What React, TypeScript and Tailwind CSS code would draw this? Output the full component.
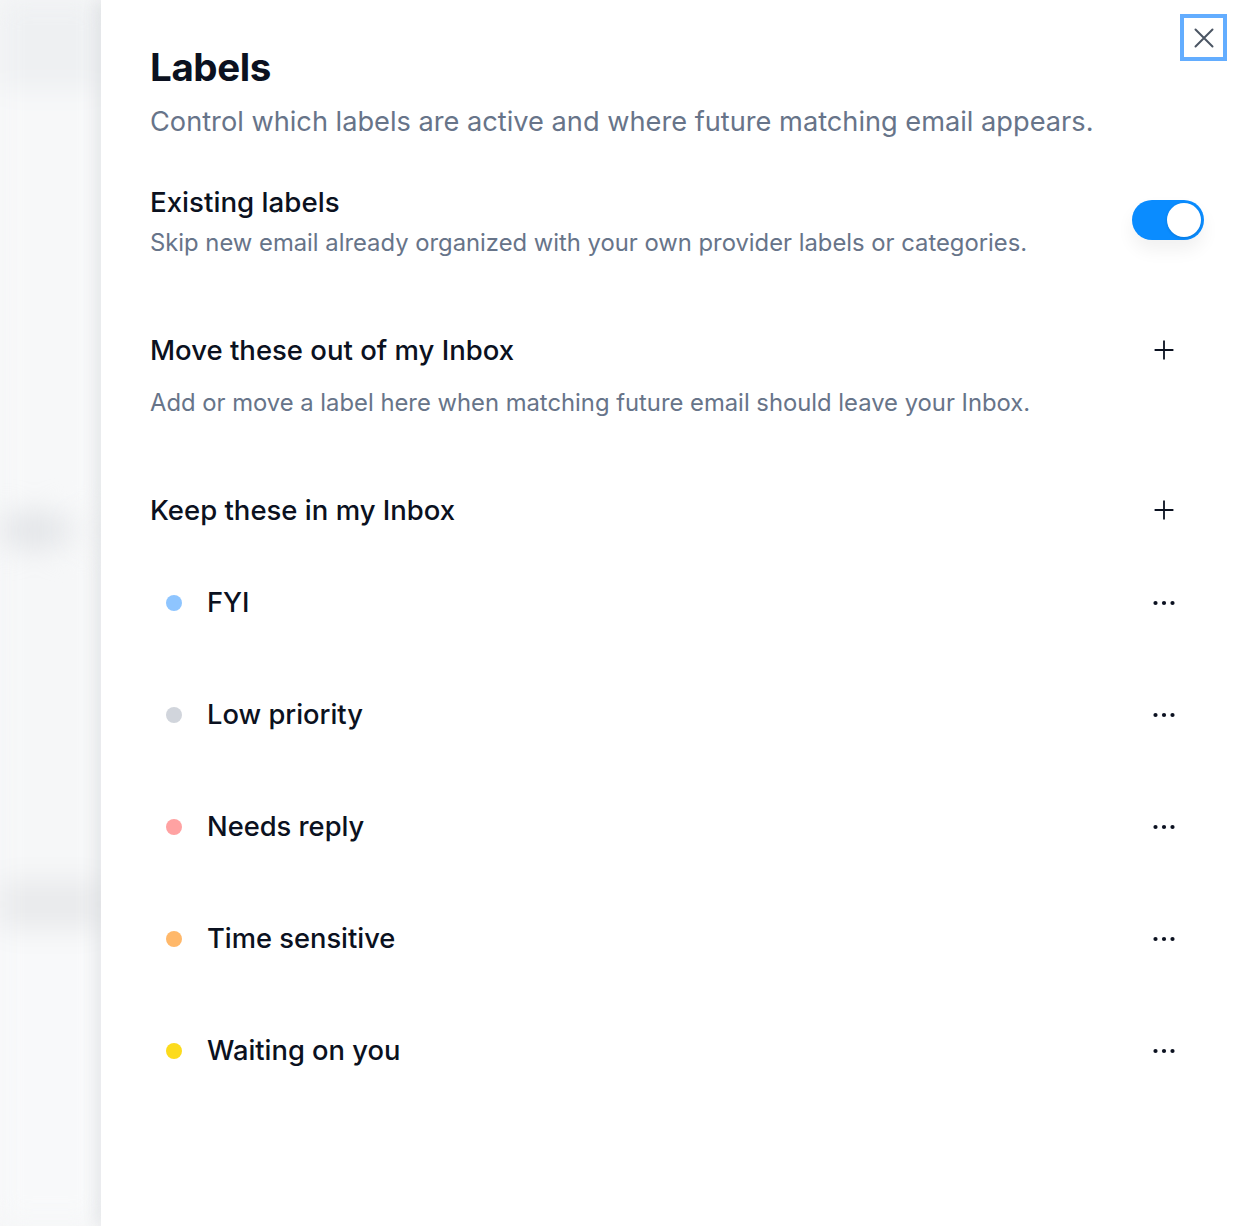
import { useState } from 'react';

type Label = {
  name: string;
  dot: string;
};

const labels: Label[] = [
  { name: 'FYI', dot: 'bg-[#8ec5ff]' },
  { name: 'Low priority', dot: 'bg-[#d1d5dc]' },
  { name: 'Needs reply', dot: 'bg-[#ffa2a2]' },
  { name: 'Time sensitive', dot: 'bg-[#ffb86a]' },
  { name: 'Waiting on you', dot: 'bg-[#fcdb1c]' },
];

function PlusIcon() {
  return (
    <svg width="20" height="20" viewBox="0 0 20 20" fill="none" stroke="currentColor" strokeWidth="1.8" strokeLinecap="square">
      <path d="M10 1.5v17M1.5 10h17" />
    </svg>
  );
}

function DotsIcon() {
  return (
    <svg width="24" height="24" viewBox="0 0 24 24" fill="currentColor">
      <circle cx="3.5" cy="12" r="2.1" />
      <circle cx="12" cy="12" r="2.1" />
      <circle cx="20.5" cy="12" r="2.1" />
    </svg>
  );
}

function CloseIcon() {
  return (
    <svg width="22" height="22" viewBox="0 0 22 22" fill="none" stroke="currentColor" strokeWidth="2" strokeLinecap="round">
      <path d="M2.5 2.5l17 17M19.5 2.5l-17 17" />
    </svg>
  );
}

function Toggle({ on, onChange }: { on: boolean; onChange: (value: boolean) => void }) {
  return (
    <button
      type="button"
      onClick={() => onChange(!on)}
      className={`mt-[16px] flex h-[40px] w-[72px] shrink-0 items-center self-start rounded-full px-[3px] shadow-[0_10px_18px_rgba(0,0,0,0.06)] ${
        on ? 'justify-end bg-[#0a8cff]' : 'justify-start bg-[#d1d5db]'
      }`}
    >
      <span className="h-[34px] w-[34px] rounded-full bg-white shadow-[0_1px_3px_rgba(0,0,0,0.15)]" />
    </button>
  );
}

export default function App() {
  const [skipExisting, setSkipExisting] = useState(true);

  return (
    <div className="flex min-h-[1226px] w-full bg-white font-['Inter','Noto_Sans',sans-serif] text-[#0b1120]">
      {/* blurred page behind the drawer */}
      <div className="relative w-[101px] shrink-0 overflow-hidden bg-[#f6f7f8]">
        <div className="flex flex-col blur-[14px]">
          <div className="h-[90px] bg-[#eef0f2]" />
          <div className="h-[420px] bg-[#f7f8f9]" />
          <div className="h-[40px] w-[70px] rounded-full bg-[#e4e6e9]" />
          <div className="h-[330px] bg-[#f6f7f8]" />
          <div className="h-[50px] bg-[#e9eaec]" />
          <div className="h-[290px] bg-[#f8f9fa]" />
        </div>
      </div>

      <div className="relative flex-1 bg-white pl-[49px] pr-[32px] shadow-[-6px_0_14px_rgba(15,23,42,0.07)]">
        <button
          type="button"
          className="absolute right-[9px] top-[14px] flex h-[47px] w-[47px] items-center justify-center border-[4px] border-[#63adff] text-[#4b5563]"
        >
          <CloseIcon />
        </button>

        <h1 className="mt-[45px] text-[38.5px] font-bold leading-[44px] tracking-[-0.01em]">Labels</h1>
        <p className="mt-[15px] text-[27.2px] leading-[36px] text-[#677489]">
          Control which labels are active and where future matching email appears.
        </p>

        <div className="mt-[44px] flex justify-between">
          <div>
            <h2 className="text-[27.7px] font-medium leading-[36px]">Existing labels</h2>
            <p className="mt-[7px] text-[23.8px] leading-[32px] text-[#677489]">
              Skip new email already organized with your own provider labels or categories.
            </p>
          </div>
          <Toggle on={skipExisting} onChange={setSkipExisting} />
        </div>

        <div className="mt-[71px] flex items-center justify-between">
          <h2 className="text-[27.5px] font-medium leading-[36px]">Move these out of my Inbox</h2>
          <button type="button" className="mr-[20px] flex h-[40px] w-[40px] items-center justify-center">
            <PlusIcon />
          </button>
        </div>
        <p className="mt-[17px] text-[23.8px] leading-[32px] text-[#677489]">
          Add or move a label here when matching future email should leave your Inbox.
        </p>

        <div className="mt-[71px] flex items-center justify-between">
          <h2 className="text-[27.5px] font-medium leading-[36px]">Keep these in my Inbox</h2>
          <button type="button" className="mr-[20px] flex h-[40px] w-[40px] items-center justify-center">
            <PlusIcon />
          </button>
        </div>

        <ul className="mt-[17px] flex flex-col">
          {labels.map((label) => (
            <li key={label.name} className="flex h-[112px] items-center justify-between">
              <div className="flex items-center">
                <span className={`ml-[16px] h-[16px] w-[16px] rounded-full ${label.dot}`} />
                <span className="ml-[25px] text-[27.3px] font-medium leading-[36px]">{label.name}</span>
              </div>
              <button type="button" className="mr-[20px] flex h-[40px] w-[40px] items-center justify-center">
                <DotsIcon />
              </button>
            </li>
          ))}
        </ul>
      </div>
    </div>
  );
}
